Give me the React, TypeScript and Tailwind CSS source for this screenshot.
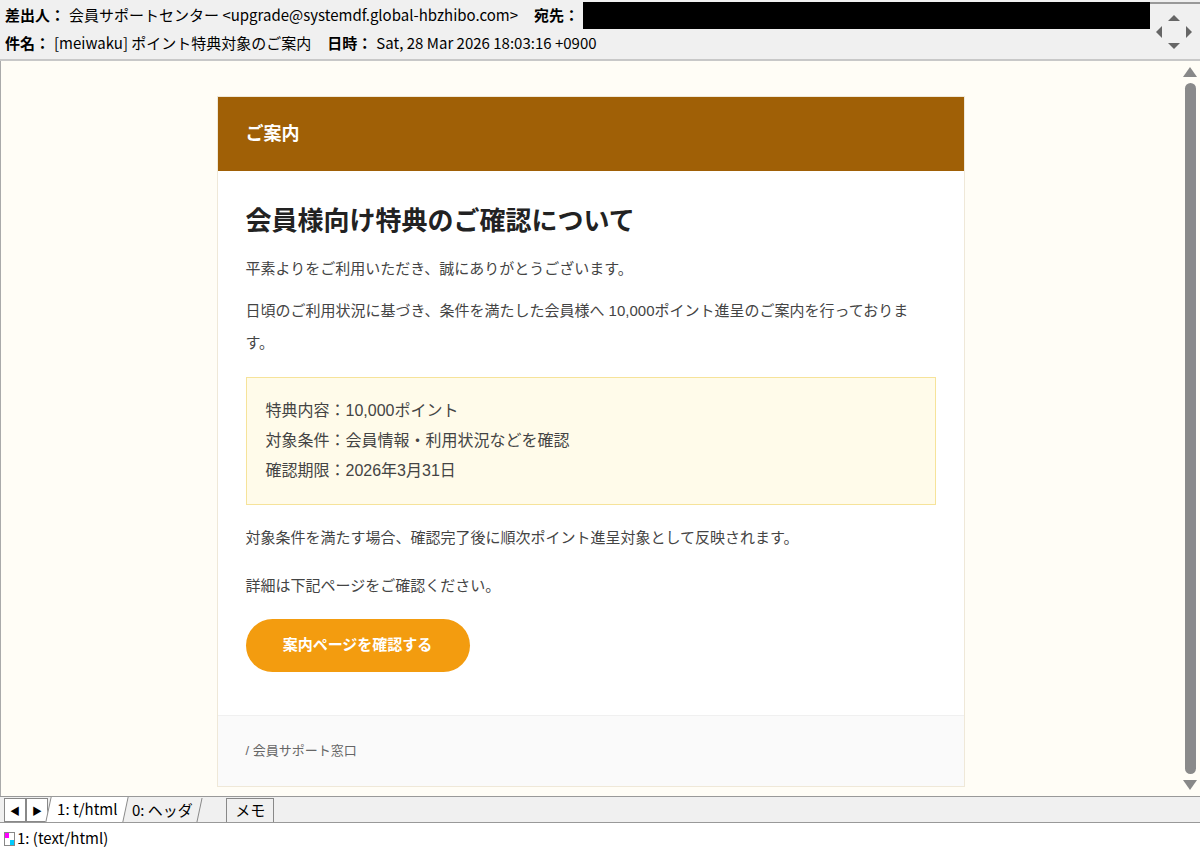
const ui = { fontFamily: '"Noto Sans CJK JP", "Liberation Sans", sans-serif' };
const mail = { fontFamily: '"Liberation Sans", "Noto Sans CJK JP", sans-serif' };

export default function App() {
  return (
    <div className="w-[1200px] h-[854px] flex flex-col bg-[#f0f0f0] overflow-hidden text-black" style={ui}>
      {/* header */}
      <div className="flex h-[61px] border-b-2 border-[#c8c8c8]">
        <div className="flex-1 flex flex-col text-[15px] leading-[28px] pl-[5px] pt-[1px]">
          <div className="flex items-center whitespace-nowrap">
            <b className="font-bold">差出人：</b>
            <span className="ml-1">会員サポートセンター &lt;upgrade@systemdf.global-hbzhibo.com&gt;</span>
            <b className="font-bold ml-4">宛先：</b>
            <div className="bg-black h-[27px] flex-1 ml-1" />
          </div>
          <div className="flex items-center whitespace-nowrap">
            <b className="font-bold">件名：</b>
            <span className="ml-1">[meiwaku] ポイント特典対象のご案内</span>
            <b className="font-bold ml-4">日時：</b>
            <span className="ml-1">Sat, 28 Mar 2026 18:03:16 +0900</span>
          </div>
        </div>
        <div className="w-[50px] relative">
          <div className="absolute left-0 right-0 top-[2px] border-t-2 border-[#999]" />
          <svg width="40" height="40" viewBox="0 0 40 40" className="absolute left-[4px] top-[12px]">
            <g fill="#666">
              <polygon points="20,3 26,9 14,9" />
              <polygon points="20,37 26,31 14,31" />
              <polygon points="2,20 8,14 8,26" />
              <polygon points="38,20 32,14 32,26" />
            </g>
          </svg>
        </div>
      </div>

      {/* body */}
      <div className="flex-1 flex bg-[#fffdf6] min-h-0 border-l border-[#aaa]">
        <div className="flex-1 flex justify-center pt-[35px]" style={mail}>
          <div className="w-[748px] h-[691px] flex flex-col bg-white border border-[#efe8d8]">
            <div className="h-[74px] bg-[#a06006] flex items-center px-[28px] text-white text-[18px] font-bold">ご案内</div>
            <div className="flex-1 px-[28px] pt-[32px] text-[15px] text-[#444]">
              <h1 className="text-[26px] font-bold text-[#222] leading-[36px]">会員様向け特典のご確認について</h1>
              <p className="mt-[14px] leading-[32px]">平素よりをご利用いただき、誠にありがとうございます。</p>
              <p className="mt-[10px] leading-[32px]">日頃のご利用状況に基づき、条件を満たした会員様へ 10,000ポイント進呈のご案内を行っております。</p>
              <div className="mt-[18px] bg-[#fffbea] border border-[#f6e39a] px-[19px] py-[18px] leading-[30px] text-[16px]">
                <div>特典内容：10,000ポイント</div>
                <div>対象条件：会員情報・利用状況などを確認</div>
                <div>確認期限：2026年3月31日</div>
              </div>
              <p className="mt-[17px] leading-[32px]">対象条件を満たす場合、確認完了後に順次ポイント進呈対象として反映されます。</p>
              <p className="mt-[16px] leading-[32px]">詳細は下記ページをご確認ください。</p>
              <div className="mt-[17px] w-[224px] h-[53px] rounded-full bg-[#f39c0f] text-white font-bold flex items-center justify-center text-[15px]">案内ページを確認する</div>
            </div>
            <div className="h-[71px] bg-[#fafafa] border-t border-[#f0f0f0] flex items-center px-[28px] text-[13px] text-[#666]">/ 会員サポート窓口</div>
          </div>
        </div>
        {/* scrollbar */}
        <div className="w-[20px] flex flex-col items-center py-[6px] gap-[6px]">
          <svg width="14" height="10" viewBox="0 0 14 10"><polygon points="7,0 14,10 0,10" fill="#888" /></svg>
          <div className="flex-1 w-[11px] rounded-full bg-[#8a8a8a]" />
          <svg width="14" height="10" viewBox="0 0 14 10"><polygon points="0,0 14,0 7,10" fill="#888" /></svg>
        </div>
      </div>

      {/* tabs */}
      <div className="h-[26px] flex items-end border-t border-[#999] bg-[#f0f0f0] text-[15px] pl-[4px]">
        <div className="flex h-[24px] mb-[1px] self-start mt-[1px]">
          <div className="w-[22px] border border-[#888] bg-white flex items-center justify-center text-[10px]">◀</div>
          <div className="w-[22px] border border-[#888] bg-white flex items-center justify-center text-[10px]">▶</div>
        </div>
        <div className="h-[25px] px-[8px] bg-white border-l border-r border-[#888] -skew-x-12 flex items-center"><span className="skew-x-12">1: t/html</span></div>
        <div className="h-[24px] px-[6px] border-r border-[#888] -skew-x-12 flex items-center"><span className="skew-x-12">0: ヘッダ</span></div>
        <div className="h-[24px] px-[8px] ml-[26px] border border-b-0 border-[#888] flex items-center">メモ</div>
      </div>
      <div className="h-[32px] bg-white border-t border-[#999] flex items-center pl-[4px] text-[15px]">
        <div className="w-[11px] h-[14px] border border-[#888] relative mr-[2px]">
          <div className="absolute left-0 top-0 w-[4px] h-[5px] bg-[#f0f]" />
          <div className="absolute right-0 bottom-0 w-[4px] h-[5px] bg-[#0cf]" />
        </div>
        1: (text/html)
      </div>
    </div>
  );
}
